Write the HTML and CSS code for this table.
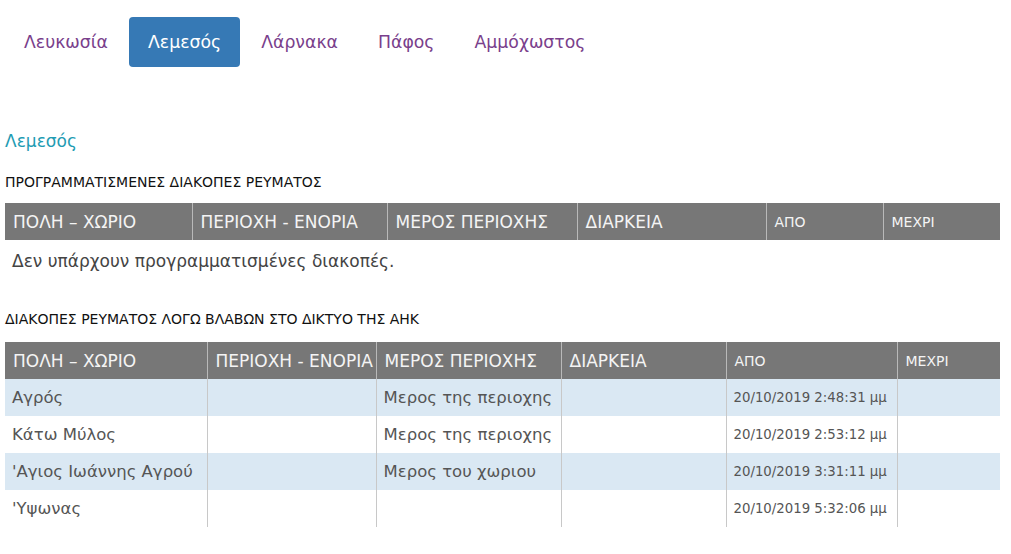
FILE: index.html
```html
<!DOCTYPE html>
<html lang="el">
<head>
<meta charset="utf-8">
<link rel="stylesheet" href="styles.css">
</head>
<body>
<ul class="tabs">
  <li class="tab">Λευκωσία</li>
  <li class="tab active">Λεμεσός</li>
  <li class="tab">Λάρνακα</li>
  <li class="tab">Πάφος</li>
  <li class="tab">Αμμόχωστος</li>
</ul>

<h2 class="city">Λεμεσός</h2>

<h3 class="section-title">ΠΡΟΓΡΑΜΜΑΤΙΣΜΕΝΕΣ ΔΙΑΚΟΠΕΣ ΡΕΥΜΑΤΟΣ</h3>
<table class="grid grid-planned">
  <colgroup>
    <col class="p1"><col class="p2"><col class="p3"><col class="p4"><col class="p5"><col class="p6">
  </colgroup>
  <thead>
    <tr>
      <th>ΠΟΛΗ – ΧΩΡΙΟ</th>
      <th>ΠΕΡΙΟΧΗ - ΕΝΟΡΙΑ</th>
      <th>ΜΕΡΟΣ ΠΕΡΙΟΧΗΣ</th>
      <th>ΔΙΑΡΚΕΙΑ</th>
      <th class="small">ΑΠΟ</th>
      <th class="small">ΜΕΧΡΙ</th>
    </tr>
  </thead>
</table>
<p class="empty">Δεν υπάρχουν προγραμματισμένες διακοπές.</p>

<h3 class="section-title second">ΔΙΑΚΟΠΕΣ ΡΕΥΜΑΤΟΣ ΛΟΓΩ ΒΛΑΒΩΝ ΣΤΟ ΔΙΚΤΥΟ ΤΗΣ ΑΗΚ</h3>
<table class="grid grid-faults">
  <colgroup>
    <col class="f1"><col class="f2"><col class="f3"><col class="f4"><col class="f5"><col class="f6">
  </colgroup>
  <thead>
    <tr>
      <th>ΠΟΛΗ – ΧΩΡΙΟ</th>
      <th>ΠΕΡΙΟΧΗ - ΕΝΟΡΙΑ</th>
      <th>ΜΕΡΟΣ ΠΕΡΙΟΧΗΣ</th>
      <th>ΔΙΑΡΚΕΙΑ</th>
      <th class="small">ΑΠΟ</th>
      <th class="small">ΜΕΧΡΙ</th>
    </tr>
  </thead>
  <tbody>
    <tr><td>Αγρός</td><td></td><td>Μερος της περιοχης</td><td></td><td class="date">20/10/2019 2:48:31 μμ</td><td></td></tr>
    <tr><td>Κάτω Μύλος</td><td></td><td>Μερος της περιοχης</td><td></td><td class="date">20/10/2019 2:53:12 μμ</td><td></td></tr>
    <tr><td>'Αγιος Ιωάννης Αγρού</td><td></td><td>Μερος του χωριου</td><td></td><td class="date">20/10/2019 3:31:11 μμ</td><td></td></tr>
    <tr><td>'Υψωνας</td><td></td><td></td><td></td><td class="date">20/10/2019 5:32:06 μμ</td><td></td></tr>
  </tbody>
</table>
</body>
</html>
```

FILE: styles.css
```css
html, body {
  background: #ffffff;
}
body {
  margin: 0;
  padding: 17px 11px 0 5px;
  font-family: "DejaVu Sans", "Noto Sans", sans-serif;
  color: #333;
}
.tabs {
  list-style: none;
  margin: 0;
  padding: 0;
  display: flex;
  gap: 2px;
}
.tab {
  height: 50px;
  padding: 0 19px;
  display: flex;
  align-items: center;
  font-size: 17.3px;
  color: #7a3f8c;
  border-radius: 4px;
}
.tab.active {
  background: #3679b5;
  color: #ffffff;
}
.city {
  margin: 64px 0 0 0;
  font-size: 17px;
  font-weight: normal;
  color: #1f9cb3;
  line-height: 20px;
}
.section-title {
  margin: 22px 0 0 0;
  font-size: 14px;
  font-weight: normal;
  color: #111;
  line-height: 18px;
}
.section-title.second {
  margin-top: 38px;
}
.grid {
  width: 995px;
  border-collapse: collapse;
  table-layout: fixed;
  margin-top: 12px;
}
.grid th {
  background: #777777;
  color: #f4f4f4;
  font-weight: normal;
  font-size: 17px;
  text-align: left;
  height: 37px;
  padding: 0 8px;
  border-left: 1px solid #b9b9b9;
  white-space: nowrap;
  overflow: hidden;
}
.grid th:first-child { border-left: none; }
.grid th.small { font-size: 14px; }
.grid td {
  height: 37px;
  padding: 0 7px;
  font-size: 16.5px;
  color: #555;
  border-left: 1px solid #c8c8c8;
  white-space: nowrap;
  overflow: hidden;
}
.grid td:first-child { border-left: none; }
.grid td.date { font-size: 13.3px; }
.grid tbody tr:nth-child(odd) td { background: #dae8f3; }
.grid-faults { margin-top: 14px; }

.p1 { width: 187px; } .p2 { width: 195px; } .p3 { width: 190px; }
.p4 { width: 189px; } .p5 { width: 117px; } .p6 { width: 117px; }
.f1 { width: 202px; } .f2 { width: 169px; } .f3 { width: 185px; }
.f4 { width: 165px; } .f5 { width: 171px; } .f6 { width: 103px; }

.empty {
  margin: 10px 0 0 7px;
  font-size: 17px;
  color: #444;
  line-height: 22px;
}
```
